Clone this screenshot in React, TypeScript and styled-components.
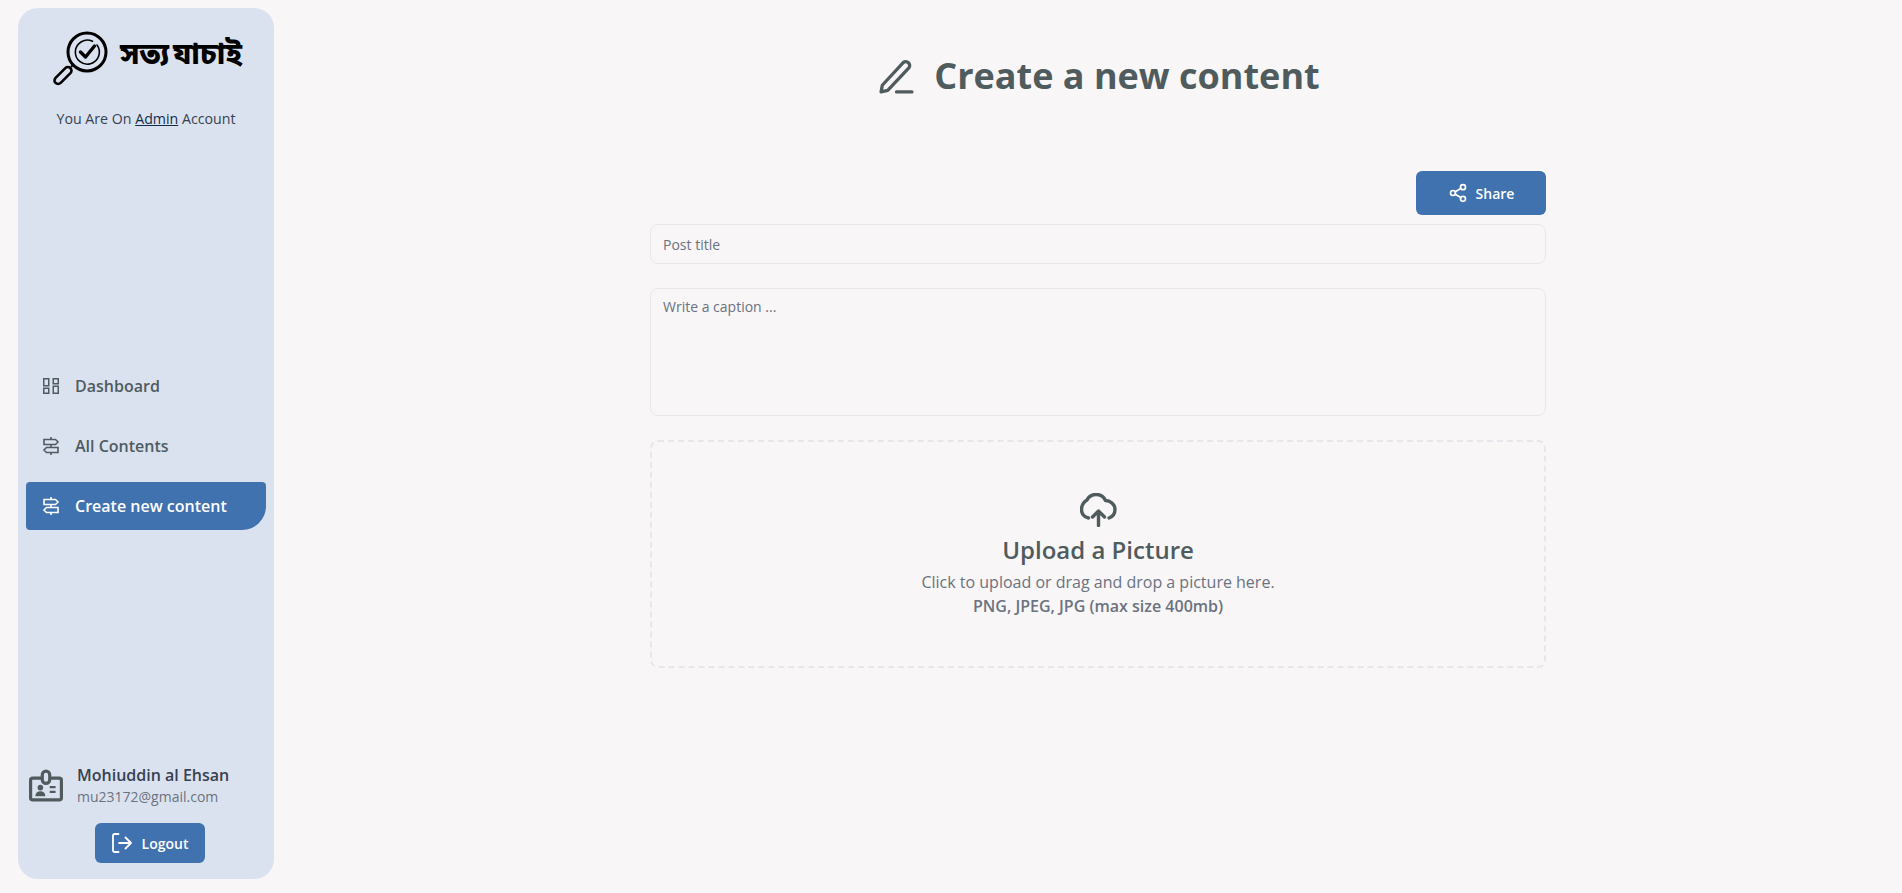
import React from 'react';
import styled, { createGlobalStyle } from 'styled-components';
import { LuShare2 } from 'react-icons/lu';

const Global = createGlobalStyle`
  * { box-sizing: border-box; }
  html, body { margin: 0; height: 100%; }
  body {
    background: #f8f6f7;
    font-family: "Open Sans", "Noto Sans", sans-serif;
  }
`;

const Page = styled.div`
  display: flex;
  height: 893px;
  overflow: hidden;
`;

const Side = styled.aside`
  width: 256px;
  height: 871px;
  margin: 8px 20px 0 18px;
  flex: none;
  background: #dbe2ef;
  border-radius: 20px;
  padding: 23px 8px 16px;
  display: flex;
  flex-direction: column;
`;

const Logo = styled.div`
  display: flex;
  align-items: center;
  gap: 12px;
  padding-left: 27px;
  color: #000;
`;

const LogoText = styled.span`
  font-family: "Noto Sans Bengali", "Noto Sans", "Open Sans", sans-serif;
  font-size: 30px;
  font-weight: 800;
  line-height: 40px;
  white-space: nowrap;
  word-spacing: -4px;
  padding-bottom: 5px;
`;

const Role = styled.p`
  margin: 23px 0 0;
  text-align: center;
  font-size: 14.2px;
  line-height: 20px;
  color: #374151;
  u { color: #112d4e; }
`;

const Nav = styled.nav`
  margin-top: 233px;
  display: flex;
  flex-direction: column;
  gap: 12px;
`;

const NavItem = styled.a<{ $active?: boolean }>`
  height: 48px;
  display: flex;
  align-items: center;
  gap: 14px;
  padding-left: 15px;
  font-size: 16px;
  font-weight: 600;
  color: ${(p) => (p.$active ? '#fff' : '#4f5b62')};
  background: ${(p) => (p.$active ? '#3f72af' : 'transparent')};
  border-radius: 4px 4px 24px 4px;
`;

const Bottom = styled.div`
  margin-top: auto;
`;

const User = styled.div`
  display: flex;
  align-items: center;
  gap: 14px;
  padding-left: 3px;
`;

const Name = styled.div`
  font-size: 16px;
  font-weight: 600;
  line-height: 24px;
  color: #374151;
`;

const Mail = styled.div`
  font-size: 14px;
  line-height: 20px;
  color: #6b7280;
`;

const Logout = styled.button`
  display: flex;
  align-items: center;
  justify-content: center;
  gap: 10px;
  width: 110px;
  height: 40px;
  margin: 16px 0 0 69px;
  border: 0;
  border-radius: 6px;
  background: #3f72af;
  color: #fff;
  font: 600 14px "Open Sans", sans-serif;
`;

const Main = styled.main`
  flex: 1;
  display: flex;
  flex-direction: column;
  align-items: center;
`;

const Title = styled.h1`
  margin: 48px 0 0;
  padding-left: 3px;
  display: flex;
  align-items: center;
  gap: 20px;
  font-size: 36px;
  line-height: 56px;
  font-weight: 700;
  color: #4f5b5d;
`;

const Form = styled.form`
  width: 896px;
  margin-top: 67px;
  display: flex;
  flex-direction: column;
`;

const ShareBtn = styled.button`
  align-self: flex-end;
  width: 130px;
  height: 44px;
  display: flex;
  align-items: center;
  justify-content: center;
  gap: 8px;
  border: 0;
  border-radius: 6px;
  background: #3f72af;
  color: #fff;
  font: 600 14px "Open Sans", sans-serif;
`;

const Input = styled.input`
  height: 40px;
  margin-top: 9px;
  padding: 0 12px;
  background: transparent;
  border: 1px solid #e5e7eb;
  border-radius: 8px;
  font: 14px "Open Sans", sans-serif;
  &::placeholder { color: #6b7280; opacity: 1; }
`;

const Caption = styled.textarea`
  height: 128px;
  margin-top: 24px;
  padding: 8px 12px;
  background: transparent;
  border: 1px solid #e5e7eb;
  border-radius: 8px;
  resize: none;
  font: 14px/20px "Open Sans", sans-serif;
  &::placeholder { color: #6b7280; opacity: 1; }
`;

const Drop = styled.div`
  height: 228px;
  margin-top: 24px;
  padding-top: 3px;
  border: 2px dashed #e5e7eb;
  border-radius: 8px;
  display: flex;
  flex-direction: column;
  align-items: center;
  justify-content: center;
  color: #4f5b5d;
`;

const DropTitle = styled.div`
  margin-top: 7px;
  font-size: 24px;
  line-height: 32px;
  font-weight: 600;
`;

const DropText = styled.div`
  margin-top: 4px;
  font-size: 16px;
  line-height: 24px;
  color: #6b7280;
`;

const DropHint = styled.div`
  font-size: 16px;
  line-height: 24px;
  font-weight: 600;
  color: #6b7280;
`;

const LogoMark = () => (
  <svg width="55" height="55" viewBox="0 0 55 55" fill="none" stroke="#000">
    <circle cx="34" cy="21" r="19" strokeWidth="3" />
    <path d="M44 14a12 12 0 1 1-4.5-3.7" strokeWidth="1.6" strokeLinecap="round" />
    <path d="M27.5 21l5 5 9-11" strokeWidth="3.4" strokeLinecap="round" strokeLinejoin="round" />
    <path d="M18 36l2.5-2.5" strokeWidth="2" />
    <rect x="-10.5" y="-3.6" width="21" height="7.2" rx="3.6" transform="translate(10 44.5) rotate(-45)" strokeWidth="2.6" />
  </svg>
);

const DashboardIcon = () => (
  <svg width="20" height="20" viewBox="0 0 20 20" fill="none" stroke="currentColor" strokeWidth="1.5">
    <rect x="2.750" y="2.750" width="5" height="7" />
    <rect x="12.250" y="2.750" width="5" height="5" />
    <rect x="2.750" y="12.250" width="5" height="5" />
    <rect x="12.250" y="10.250" width="5" height="7" />
  </svg>
);

const SignIcon = () => (
  <svg width="20" height="20" viewBox="0 0 20 20" fill="none" stroke="currentColor" strokeWidth="1.6" strokeLinejoin="miter">
    <path d="M10 1v2.500M10 8.500v3M10 16.500V19" />
    <path d="M3 3.500h11.500L17 6l-2.500 2.500H3z" />
    <path d="M17 11.500H5.500L3 14l2.500 2.500H17z" />
  </svg>
);

const BadgeIcon = () => (
  <svg width="34" height="33" viewBox="0 0 32 30" fill="none" stroke="#4f5b5d" style={{ flex: 'none' }}>
    <path d="M12.500 8H3.500a2 2 0 0 0-2 2v16.500a2 2 0 0 0 2 2h25a2 2 0 0 0 2-2V10a2 2 0 0 0-2-2h-9" strokeWidth="3" />
    <rect x="12.500" y="1.500" width="7" height="11.500" rx="3.500" strokeWidth="3" />
    <circle cx="10.700" cy="17" r="2.600" fill="#4f5b5d" stroke="none" />
    <path d="M6 25c0-3 2-4.500 4.700-4.500S15.400 22 15.400 25z" fill="#4f5b5d" stroke="none" />
    <path d="M19.500 16.500H25M19.500 21H25" strokeWidth="2" />
  </svg>
);

const LogoutIcon = () => (
  <svg width="20" height="20" viewBox="0 0 20 20" fill="none" stroke="currentColor" strokeWidth="1.8" strokeLinecap="round" strokeLinejoin="round">
    <path d="M6.500 1H2.500a1.500 1.500 0 0 0-1.500 1.500v15A1.500 1.500 0 0 0 2.500 19h4" />
    <path d="M7 10h12M13.500 4.500L19 10l-5.500 5.500" />
  </svg>
);

const PenIcon = () => (
  <svg width="35" height="35" viewBox="0 0 34 34" fill="none" stroke="currentColor" strokeWidth="3.2" strokeLinecap="round" strokeLinejoin="round">
    <path d="M2 32l1.200-6.500L23.500 3.500a3.800 3.800 0 0 1 5.500 5.200L8.500 30.500z" />
    <path d="M17 32h15" />
  </svg>
);

const CloudIcon = () => (
  <svg width="37" height="34" viewBox="0 0 37 34" fill="none" stroke="currentColor" strokeWidth="3.400" strokeLinecap="round" strokeLinejoin="round">
    <path d="M8.500 25C3.500 24 1.500 20 1.500 16.500 1.500 12 4.500 8.500 7 7 9 3 13 1.500 16 1.500c4.500 0 8 2.500 9.500 6 4.500 0 9.500 3.500 9.500 9 0 3.500-2 7-6 8.500" />
    <path d="M18.500 32.500V19M12.500 24l6-6 6 6" />
  </svg>
);

export default function App() {
  return (
    <Page>
      <Global />
      <Side>
        <Logo>
          <LogoMark />
          <LogoText>সত্য যাচাই</LogoText>
        </Logo>
        <Role>
          You Are On <u>Admin</u> Account
        </Role>
        <Nav>
          <NavItem>
            <DashboardIcon />
            Dashboard
          </NavItem>
          <NavItem>
            <SignIcon />
            All Contents
          </NavItem>
          <NavItem $active>
            <SignIcon />
            Create new content
          </NavItem>
        </Nav>
        <Bottom>
          <User>
            <BadgeIcon />
            <div>
              <Name>Mohiuddin al Ehsan</Name>
              <Mail>mu23172@gmail.com</Mail>
            </div>
          </User>
          <Logout type="button">
            <LogoutIcon />
            Logout
          </Logout>
        </Bottom>
      </Side>
      <Main>
        <Title>
          <PenIcon />
          Create a new content
        </Title>
        <Form>
          <ShareBtn type="button">
            <LuShare2 size={20} />
            Share
          </ShareBtn>
          <Input placeholder="Post title" />
          <Caption placeholder="Write a caption ..." />
          <Drop>
            <CloudIcon />
            <DropTitle>Upload a Picture</DropTitle>
            <DropText>Click to upload or drag and drop a picture here.</DropText>
            <DropHint>PNG, JPEG, JPG (max size 400mb)</DropHint>
          </Drop>
        </Form>
      </Main>
    </Page>
  );
}
